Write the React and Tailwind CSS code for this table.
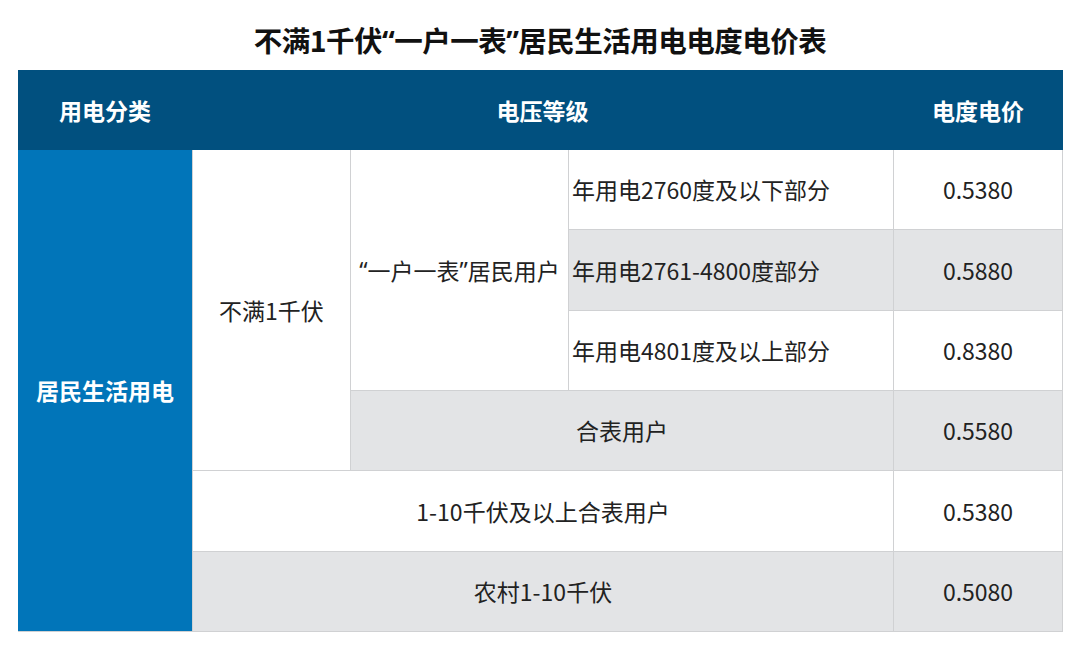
// narrow latin quotes, as in the picture (CJK font draws them full width)
const Q = ({ children }) => (
  <span style={{ fontFamily: '"Noto Sans", sans-serif' }}>{children}</span>
);

export default function App() {
  const font = { fontFamily: '"Noto Sans CJK SC", "Noto Sans", sans-serif' };
  const cell = "flex items-center justify-center text-[23px] text-[#222]";
  const gray = "bg-[#e3e4e6]";

  return (
    <div className="w-[1080px] h-[660px] bg-white" style={font}>
      {/* Title */}
      <div className="h-[70px] flex items-center justify-center pt-[12px]">
        <h1 className="text-[28.5px] font-bold text-[#111] tracking-[-0.5px]">
          不满1千伏<Q>“</Q>一户一表<Q>”</Q>居民生活用电电度电价表
        </h1>
      </div>

      <div className="ml-[18px] w-[1045px]">
        {/* Header */}
        <div className="h-[80px] bg-[#01507f] grid grid-cols-[174px_158px_218px_325px_1fr] text-white text-[23px] font-bold">
          <div className="flex items-center justify-center">用电分类</div>
          <div className="col-span-3 flex items-center justify-center">电压等级</div>
          <div className="flex items-center justify-center">电度电价</div>
        </div>

        {/* Body */}
        <div className="h-[482px] grid grid-cols-[174px_157px_217px_324px_1fr] grid-rows-[repeat(6,minmax(0,1fr))] gap-px bg-[#d0d1d3] border-r border-b border-[#d0d1d3]">
          <div className="row-span-6 bg-[#0175b9] flex items-center justify-center text-white text-[23px] font-bold">
            居民生活用电
          </div>
          <div className={`row-span-4 bg-white ${cell}`}>不满1千伏</div>
          <div className={`row-span-3 bg-white ${cell} whitespace-nowrap`}>
            <Q>“</Q>一户一表<Q>”</Q>居民用户
          </div>
          <div className={`bg-white ${cell} justify-start pl-[3px]`}>年用电2760度及以下部分</div>
          <div className={`bg-white ${cell}`}>0.5380</div>

          <div className={`${gray} ${cell} justify-start pl-[3px]`}>年用电2761-4800度部分</div>
          <div className={`${gray} ${cell}`}>0.5880</div>

          <div className={`bg-white ${cell} justify-start pl-[3px]`}>年用电4801度及以上部分</div>
          <div className={`bg-white ${cell}`}>0.8380</div>

          <div className={`col-span-2 ${gray} ${cell}`}>合表用户</div>
          <div className={`${gray} ${cell}`}>0.5580</div>

          <div className={`col-span-3 bg-white ${cell}`}>1-10千伏及以上合表用户</div>
          <div className={`bg-white ${cell}`}>0.5380</div>

          <div className={`col-span-3 ${gray} ${cell}`}>农村1-10千伏</div>
          <div className={`${gray} ${cell}`}>0.5080</div>
        </div>
      </div>
    </div>
  );
}
